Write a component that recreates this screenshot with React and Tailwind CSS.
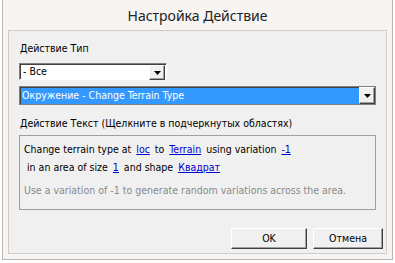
import React from "react";

const DropArrow = () => (
  <div className="w-[16px] h-full bg-[#f0f0f0] border-t border-l border-t-white border-l-white border-r border-b border-r-[#404040] border-b-[#404040] flex items-center justify-center shadow-[inset_-1px_-1px_0_#a0a0a0]">
    <svg width="7" height="4" viewBox="0 0 7 4">
      <path d="M0 0h7L3.5 4z" fill="#000" />
    </svg>
  </div>
);

const Link = ({ children }) => (
  <span className="mx-[2px] text-[#0000cc] underline underline-offset-1">{children}</span>
);

const App = () => {
  return (
    <div className="w-[395px] h-[263px] bg-white overflow-hidden font-['DejaVu_Sans_Condensed','DejaVu_Sans',sans-serif] [font-stretch:condensed] text-[10.5px] text-black">
      <div className="ml-[2px] w-[391px] h-[260px] bg-[#f7f4f2] border-l border-r border-b border-[#b9b6b3] flex flex-col">
        <div className="h-[30px] flex items-center justify-center font-['Noto_Sans',sans-serif] [font-stretch:normal] text-[14px] text-[#222]">
          Настройка Действие
        </div>
        <div className="mx-[5px] h-[224px] bg-[#f0f0f0] border border-[#cfccc9] flex flex-col px-[10px] pt-[10px]">
          <div className="h-[14px] leading-[14px] pl-[1px]">Действие Тип</div>
          <div className="mt-[8px] w-[148px] h-[17px] bg-white border-t border-l border-t-[#808080] border-l-[#808080] border-b border-r border-b-white border-r-white shadow-[inset_1px_1px_0_#404040] flex">
            <div className="flex-1 pl-[3px] leading-[15px]">- Все</div>
            <div className="h-[15px] mt-px mr-px"><DropArrow /></div>
          </div>
          <div className="mt-[6px] w-[357px] h-[19px] bg-[#3399ff] border border-[#808080] shadow-[inset_1px_1px_0_#404040] flex">
            <div className="flex-1 pl-[2px] leading-[17px] text-white">Окружение - Change Terrain Type</div>
            <div className="h-[17px]"><DropArrow /></div>
          </div>
          <div className="mt-[11px] h-[14px] leading-[14px] pl-[1px]">
            Действие Текст (Щелкните в подчеркнутых областях)
          </div>
          <div className="mt-[5px] w-[357px] h-[75px] border border-[#a0a0a0] px-[4px] pt-[4px]">
            <div className="leading-[18px]">
              Change terrain type at <Link>loc</Link> to <Link>Terrain</Link> using variation <Link>-1</Link>
            </div>
            <div className="leading-[18px]">
              &nbsp;in an area of size <Link>1</Link> and shape <Link>Квадрат</Link>
            </div>
            <div className="mt-[5px] leading-[18px] text-[#8a8a8a]">
              Use a variation of -1 to generate random variations across the area.
            </div>
          </div>
          <div className="mt-[18px] -mr-[7px] flex justify-end gap-[6px]">
            <button className="w-[76px] h-[21px] bg-[#f0f0f0] border border-t-white border-l-white border-r-[#404040] border-b-[#404040] shadow-[inset_-1px_-1px_0_#a0a0a0] leading-[19px]">
              OK
            </button>
            <button className="w-[70px] h-[21px] bg-[#f0f0f0] border border-t-white border-l-white border-r-[#404040] border-b-[#404040] shadow-[inset_-1px_-1px_0_#a0a0a0] leading-[19px]">
              Отмена
            </button>
          </div>
        </div>
      </div>
    </div>
  );
};

export default App;
